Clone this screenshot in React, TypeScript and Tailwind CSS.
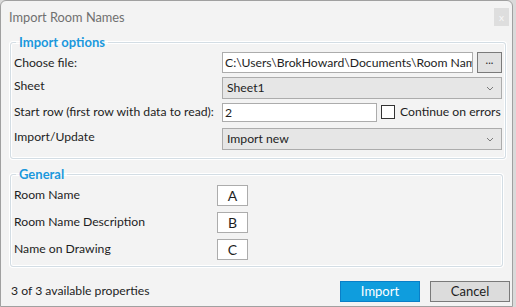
import React, { useState } from "react";

const font = { fontFamily: 'Lato, "Segoe UI", "Noto Sans", sans-serif' };

function Chevron() {
  return (
    <svg width="8" height="5" viewBox="0 0 8 5" className="mr-[7px]">
      <path d="M1 1 L4 4 L7 1" fill="none" stroke="#7a7a7a" strokeWidth="1" />
    </svg>
  );
}

function Combo({ value }: { value: string }) {
  return (
    <div className="flex h-full items-center justify-between border border-[#acacac] bg-[#e6e6e6] pl-[4px]">
      <span>{value}</span>
      <Chevron />
    </div>
  );
}

function LetterBox({ letter }: { letter: string }) {
  return (
    <div className="flex h-[21px] w-[31px] items-center justify-center border border-[#acacac] bg-white text-[14px]">
      {letter}
    </div>
  );
}

export default function App() {
  const [continueOnErrors, setContinueOnErrors] = useState(false);
  const [filePath, setFilePath] = useState("C:\\Users\\BrokHoward\\Documents\\Room Names.xlsx");
  const [startRow, setStartRow] = useState("2");

  return (
    <div className="h-[307px] w-[516px] whitespace-nowrap bg-[#dadada] text-[12.2px] text-[#1e1e1e]" style={font}>
      <div className="flex h-[307px] w-[513px] flex-col rounded-t-[6px] border border-[#a0a0a0] bg-[#f3f3f3]">
        {/* title bar */}
        <div className="flex h-[34px] items-start justify-between pl-[8px] pr-[3px]">
          <span className="mt-[7px] text-[12.8px] text-[#707070]">Import Room Names</span>
          <div className="mt-[7px] flex h-[18px] w-[15px] items-center justify-center bg-[#dedede] text-[10px] leading-none text-[#f8f8f8]">
            x
          </div>
        </div>

        {/* Import options */}
        <fieldset className="mx-[9px] rounded-[3px] border border-[#d3dde4] px-[3px] pb-[8px] pt-[3px] shadow-[inset_0_0_0_1px_#fff,0_0_0_1px_#fff]">
          <legend className="ml-[2px] px-[3px] text-[13px] leading-[14px] font-bold text-[#1b98dc]">Import options</legend>
          <div className="grid grid-cols-[208px_1fr] items-center">
            <span className="self-center pt-[1px]">Choose file:</span>
            <div className="flex h-[21px] items-center gap-[4px]">
              <input
                type="text"
                value={filePath}
                onChange={(e) => setFilePath(e.target.value)}
                className="h-[21px] w-[251px] border border-[#acacac] bg-white pl-[2px] outline-none"
              />
              <div className="flex h-[21px] w-[25px] items-start justify-center border border-[#7a7a7a] bg-[#e1e1e1] text-[11px] leading-[14px]">
                ...
              </div>
            </div>

            <span className="mt-[4px] self-start">Sheet</span>
            <div className="mt-[4px] h-[22px]">
              <Combo value="Sheet1" />
            </div>

            <span className="mt-[4px]">Start row (first row with data to read):</span>
            <div className="mt-[4px] flex h-[19px] items-center">
              <input
                type="text"
                value={startRow}
                onChange={(e) => setStartRow(e.target.value)}
                className="h-[19px] w-[155px] border border-[#acacac] bg-white pl-[2px] outline-none"
              />
              <button
                type="button"
                onClick={() => setContinueOnErrors(!continueOnErrors)}
                className="ml-[4px] flex items-center gap-[5px]"
              >
                <span className="flex h-[14px] w-[14px] items-center justify-center border border-[#333] bg-white text-[10px] leading-none">
                  {continueOnErrors ? "✓" : ""}
                </span>
                <span className="text-[12.2px]">Continue on errors</span>
              </button>
            </div>

            <span className="mt-[6px] self-start">Import/Update</span>
            <div className="mt-[6px] h-[22px]">
              <Combo value="Import new" />
            </div>
          </div>
        </fieldset>

        {/* General */}
        <fieldset className="mx-[9px] mt-[8px] rounded-[3px] border border-[#d3dde4] px-[3px] pb-[6px] shadow-[inset_0_0_0_1px_#fff,0_0_0_1px_#fff]">
          <legend className="ml-[2px] px-[3px] text-[13px] leading-[14px] font-bold text-[#1b98dc]">General</legend>
          <div className="grid grid-cols-[203px_auto] items-center gap-y-[6px] pt-[4px]">
            <span>Room Name</span>
            <LetterBox letter="A" />
            <span>Room Name Description</span>
            <LetterBox letter="B" />
            <span>Name on Drawing</span>
            <LetterBox letter="C" />
          </div>
        </fieldset>

        {/* footer */}
        <div className="flex flex-1 items-end justify-between pb-[4px] pl-[10px] pr-[2px]">
          <span className="mb-[2px]">3 of 3 available properties</span>
          <div className="flex gap-[10px]">
            <button type="button" className="h-[21px] w-[80px] border border-[#0a7fc7] bg-[#0f9ddd] text-[13px] text-white">
              Import
            </button>
            <button type="button" className="h-[21px] w-[80px] border border-[#7a7a7a] bg-[#dcdcdc] text-[13px]">
              Cancel
            </button>
          </div>
        </div>
      </div>
    </div>
  );
}
